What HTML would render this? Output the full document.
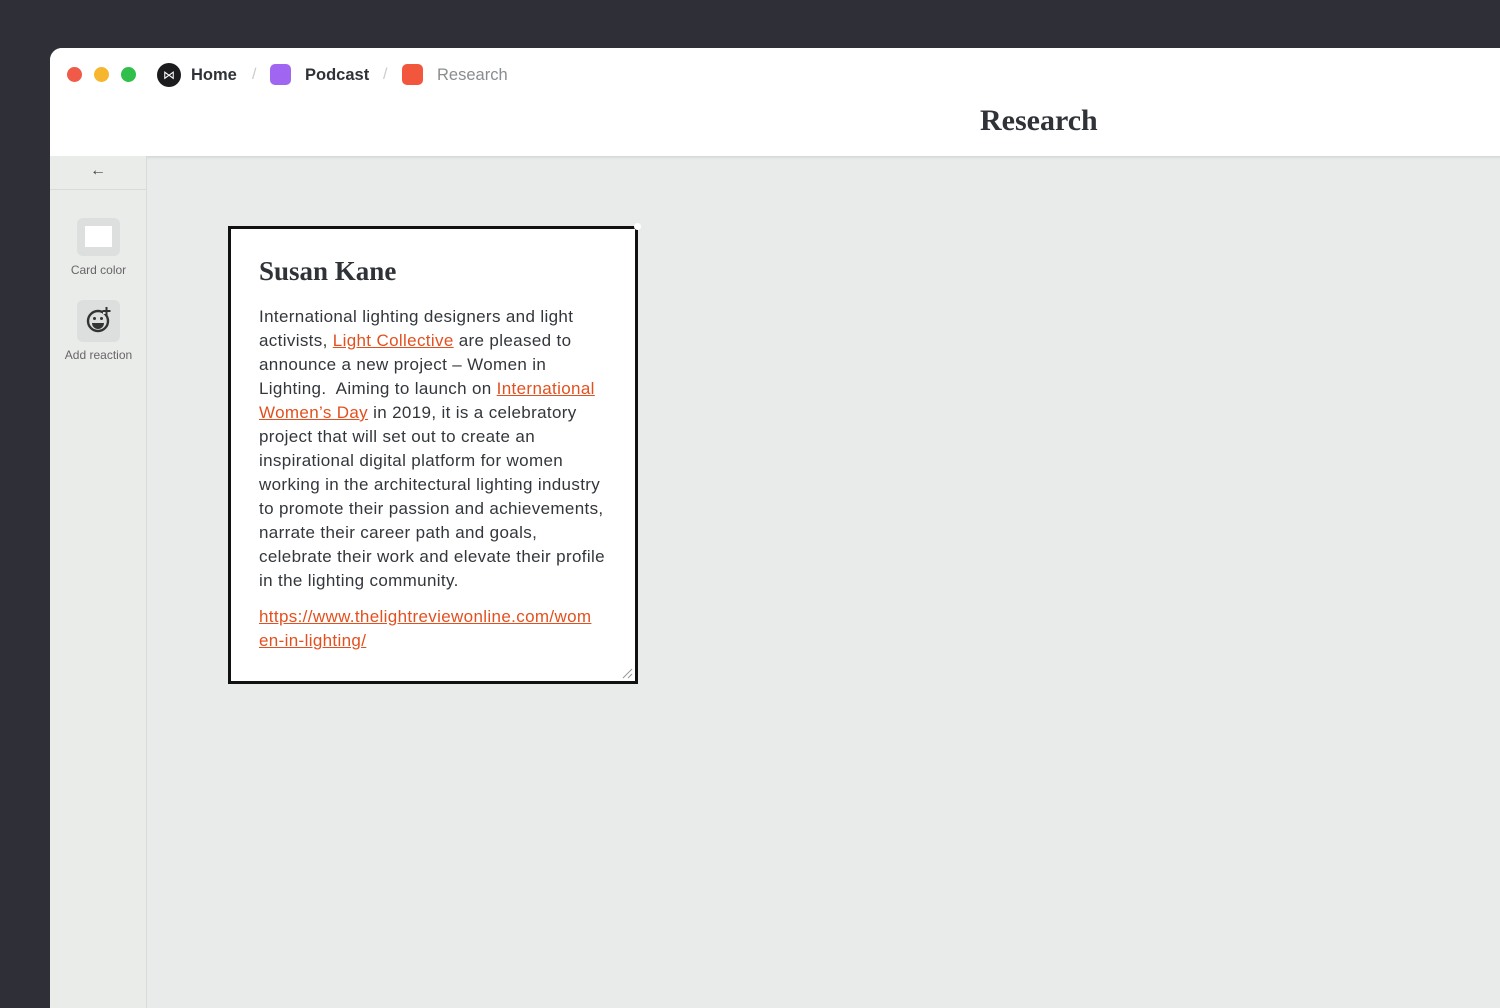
<!DOCTYPE html>
<html><head><meta charset="utf-8"><style>
*{margin:0;padding:0;box-sizing:border-box}
body{width:1500px;height:1000px;background:#2f2f38;position:relative;overflow:hidden;font-family:"Liberation Sans",sans-serif}
.win{position:absolute;left:50px;top:48px;width:1460px;height:960px;background:#e8ebe9;border-top-left-radius:12px;overflow:hidden}
.hdr{position:absolute;left:0;top:0;right:0;height:108px;background:#fff;box-shadow:0 1px 3px rgba(0,0,0,.12)}
.dot{position:absolute;top:19px;width:15px;height:15px;border-radius:50%}
.crumb{position:absolute;top:18px;font-size:16.5px;font-weight:bold;color:#2f3337}
.sep{position:absolute;top:18px;font-size:16px;color:#ccc}
.sq{position:absolute;top:16px;width:21px;height:21px;border-radius:5px}
.title{position:absolute;left:930px;top:56px;font-family:"Liberation Serif",serif;font-weight:bold;font-size:30px;color:#2f3337}
.side{position:absolute;left:0;top:108px;width:97px;bottom:0;background:#eaecea;border-right:1px solid #d8dbd9}
.card{position:absolute;left:178px;top:178px;width:410px;height:458px;background:#fff;border:3px solid #111}
.card h1{position:absolute;left:28px;top:27px;font-family:"Liberation Serif",serif;font-size:27px;color:#2f3337}
.body{position:absolute;left:28px;top:76px;font-size:17px;letter-spacing:.35px;line-height:24px;color:#33373b;white-space:nowrap}
a{color:#e3501f;text-decoration:underline}
.lbl{position:absolute;width:97px;text-align:center;font-size:12px;color:#666}
</style></head><body>
<div class="win">
<div class="hdr">
<div class="dot" style="left:17px;background:#f05a48"></div>
<div class="dot" style="left:44px;background:#f6b630"></div>
<div class="dot" style="left:71px;background:#2fbf4a"></div>
<div style="position:absolute;left:107px;top:15px;width:24px;height:24px;border-radius:50%;background:#1c1c1e;color:#fff;font-size:12px;text-align:center;line-height:24px">⋈</div>
<div class="crumb" style="left:141px">Home</div>
<div class="sep" style="left:202px">/</div>
<div class="sq" style="left:220px;background:#a066f2"></div>
<div class="crumb" style="left:255px">Podcast</div>
<div class="sep" style="left:333px">/</div>
<div class="sq" style="left:352px;background:#f2573e"></div>
<div class="crumb" style="left:387px;color:#8a8d90;font-weight:normal">Research</div>
<div class="title">Research</div>
</div>
<div class="side">
<div style="position:absolute;left:0;top:0;width:96px;height:34px;border-bottom:1px solid #d8dbd9;text-align:center;line-height:30px;font-size:16px;color:#444">←</div>
<div style="position:absolute;left:27px;top:62px;width:43px;height:38px;border-radius:6px;background:#dcdfdd"><div style="margin:8px 0 0 8px;width:27px;height:21px;background:#fff"></div></div>
<div class="lbl" style="top:107px">Card color</div>
<div style="position:absolute;left:27px;top:144px;width:43px;height:42px;border-radius:6px;background:#dcdfdd">
<svg width="43" height="42" viewBox="0 0 43 42"><circle cx="21" cy="21" r="10" fill="none" stroke="#333" stroke-width="2.4"/><circle cx="17.5" cy="18.5" r="1.5" fill="#333"/><circle cx="24.5" cy="18.5" r="1.5" fill="#333"/><path d="M15 23h12a6 6 0 0 1-12 0z" fill="#333"/><rect x="26" y="8" width="7" height="6" fill="#dcdfdd"/><path d="M29.5 7v8M25.5 11h8" stroke="#333" stroke-width="2"/></svg></div>
<div class="lbl" style="top:192px">Add reaction</div>
</div>
<div class="card">
<h1>Susan Kane</h1>
<div class="body">International lighting designers and light<br>activists, <a>Light Collective</a> are pleased to<br>announce a new project – Women in<br>Lighting.&nbsp; Aiming to launch on <a>International<br>Women’s Day</a> in 2019, it is a celebratory<br>project that will set out to create an<br>inspirational digital platform for women<br>working in the architectural lighting industry<br>to promote their passion and achievements,<br>narrate their career path and goals,<br>celebrate their work and elevate their profile<br>in the lighting community.<div style="height:12px"></div><a>https://www.thelightreviewonline.com/wom<br>en-in-lighting/</a></div>
<div style="position:absolute;right:-6px;top:-6px;width:7px;height:7px;border-radius:50%;background:#fff"></div>
<svg style="position:absolute;right:2px;bottom:2px" width="12" height="12"><path d="M11 2L2 11M11 7L7 11" stroke="#999" stroke-width="1"/></svg>
</div>
</div>
</body></html>
